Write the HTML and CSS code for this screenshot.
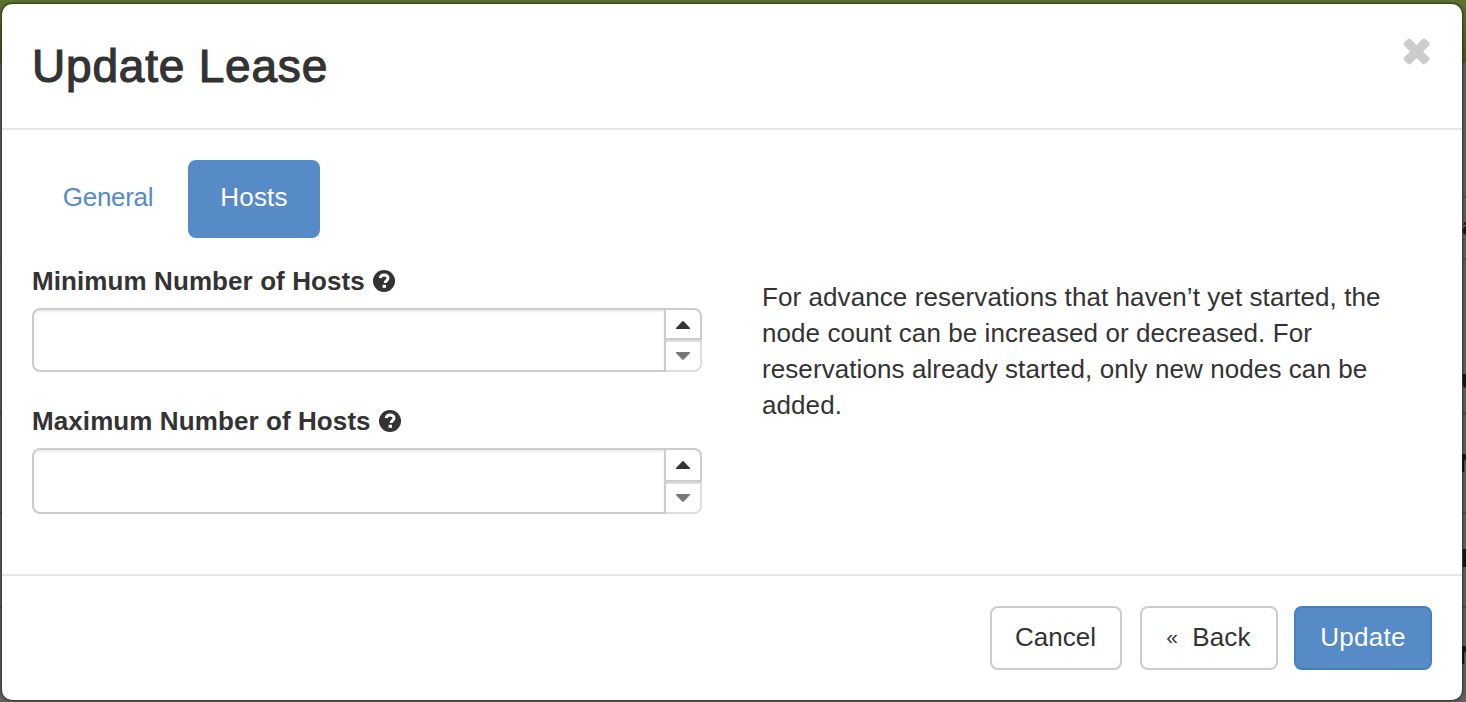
FILE: index.html
```html
<!DOCTYPE html>
<html lang="en">
<head>
<meta charset="utf-8">
<title>Update Lease</title>
<link rel="stylesheet" href="styles.css">
</head>
<body>
<div class="backdrop" aria-hidden="true">
  <div class="topbar"></div>
  <span class="rule rule-1"></span><span class="rule rule-2"></span><span class="rule rule-3"></span><span class="rule rule-4"></span><span class="rule rule-5"></span>
  <span class="peek peek-1">a</span>
  <span class="peek peek-2">u</span>
  <span class="peek peek-3">N</span>
  <span class="peek peek-4">I</span>
  <span class="peek peek-5">N</span>
</div>
<div class="modal" role="dialog">
  <header class="modal-header">
    <h3 class="title">Update Lease</h3>
    <button class="close" aria-label="Close"><svg width="28" height="28" viewBox="0 0 28 28"><g transform="translate(13.6 14.5) rotate(45)" fill="#ccc"><rect x="-15" y="-4.6" width="30" height="9.2" rx="2.2"/><rect x="-4.6" y="-15" width="9.2" height="30" rx="2.2"/></g></svg></button>
  </header>
  <div class="modal-body">
    <nav class="tabs">
      <a class="tab general">General</a>
      <a class="tab active">Hosts</a>
    </nav>
    <div class="columns">
      <form class="fields">
        <div class="field">
          <label class="label"><span>Minimum Number of Hosts</span>
            <svg class="help" width="22" height="22" viewBox="0 0 22 22"><circle cx="11" cy="11" r="11" fill="#333"/><path d="M7.2 8.2C7.4 5.7 9 4.9 11 4.9c2.2 0 4 1.1 4 3.2 0 2.6-2.9 2.5-2.9 4.9" fill="none" stroke="#fff" stroke-width="3"/><rect x="9.6" y="14.8" width="3.4" height="3" fill="#fff"/></svg></label>
          <div class="spinner">
            <div class="input"></div>
            <div class="steps">
              <span class="step up"><svg width="14" height="8" viewBox="0 0 14 8"><path d="M0 7 6.2.4Q7-.2 7.8.4L14 7v1H0z" fill="#333"/></svg></span>
              <span class="step down"><svg width="14" height="8" viewBox="0 0 14 8"><path d="M0 0h14v1L7.8 7.6Q7 8.2 6.2 7.6L0 1z" fill="#777"/></svg></span>
            </div>
          </div>
        </div>
        <div class="field tall">
          <label class="label"><span>Maximum Number of Hosts</span>
            <svg class="help" width="22" height="22" viewBox="0 0 22 22"><circle cx="11" cy="11" r="11" fill="#333"/><path d="M7.2 8.2C7.4 5.7 9 4.9 11 4.9c2.2 0 4 1.1 4 3.2 0 2.6-2.9 2.5-2.9 4.9" fill="none" stroke="#fff" stroke-width="3"/><rect x="9.6" y="14.8" width="3.4" height="3" fill="#fff"/></svg></label>
          <div class="spinner">
            <div class="input"></div>
            <div class="steps">
              <span class="step up"><svg width="14" height="8" viewBox="0 0 14 8"><path d="M0 7 6.2.4Q7-.2 7.8.4L14 7v1H0z" fill="#333"/></svg></span>
              <span class="step down"><svg width="14" height="8" viewBox="0 0 14 8"><path d="M0 0h14v1L7.8 7.6Q7 8.2 6.2 7.6L0 1z" fill="#777"/></svg></span>
            </div>
          </div>
        </div>
      </form>
      <p class="description">For advance reservations that haven’t yet started, the<br>node count can be increased or decreased. For<br>reservations already started, only new nodes can be<br>added.</p>
    </div>
  </div>
  <footer class="modal-footer">
    <button class="btn cancel"><span>Cancel</span></button>
    <button class="btn back"><span class="chev">«</span><span>Back</span></button>
    <button class="btn primary"><span>Update</span></button>
  </footer>
</div>
</body>
</html>
```
FILE: styles.css
```css
* { box-sizing: border-box; }
body {
  margin: 0;
  width: 1466px;
  height: 702px;
  padding: 4px 4px 2px 2px;
  overflow: hidden;
  background: #616161;
  color: #333;
  font: 26px/36px "Liberation Sans", Arial, sans-serif;
}
.backdrop { position: absolute; top: 0; left: 0; width: 1466px; height: 702px; overflow: hidden; }
.topbar { height: 63px; background: linear-gradient(#5c7432, #42591d); }
.rule { position: absolute; left: 0; width: 100%; height: 2px; background: #515151; }
.rule-1 { top: 196px; }
.rule-2 { top: 258px; }
.rule-3 { top: 412px; height: 3px; }
.rule-4 { top: 512px; }
.rule-5 { top: 606px; }
.peek { position: absolute; left: 1462px; color: #161616; font-weight: bold; font-size: 26px; line-height: 30px; }
.peek-1 { top: 211px; }
.peek-2 { top: 364px; left: 1461px; }
.peek-3 { top: 448px; left: 1459px; }
.peek-4 { top: 543px; left: 1461px; }
.peek-5 { top: 640px; left: 1459px; }
.modal {
  position: relative;
  width: 1460px;
  height: 696px;
  display: flex;
  flex-direction: column;
  background: #fff;
  border-radius: 10px;
  box-shadow: 0 0 3px 1px rgba(0, 0, 0, .5);
}
.modal-header {
  height: 126px;
  padding: 30px;
  display: flex;
  justify-content: space-between;
  align-items: flex-start;
  border-bottom: 2px solid #e5e5e5;
}
.title { margin: 0; font-size: 46px; line-height: 64px; font-weight: normal; letter-spacing: .8px; -webkit-text-stroke: 1.2px #333; white-space: nowrap; }
.close { margin: 3px 1px 0 0; padding: 0; border: 0; background: none; width: 28px; height: 28px; }
.close svg { display: block; }
.modal-body { height: 444px; padding: 30px; }
.tabs { display: flex; gap: 4px; height: 78px; }
.tab { width: 152px; height: 78px; line-height: 74px; text-align: center; color: #568bc7; border-radius: 8px; white-space: nowrap; }
.general { letter-spacing: -.3px; }
.tab.active { width: 132px; background: #568bc7; color: #fff; letter-spacing: .2px; }
.columns { display: flex; gap: 60px; padding-top: 24px; }
.fields { width: 670px; }
.field { height: 140px; }
.label { display: flex; align-items: center; gap: 7px; height: 38px; font-weight: bold; letter-spacing: .09px; white-space: nowrap; }
.spinner { display: flex; height: 64px; margin-top: 8px; }
.tall .spinner { height: 66px; }
.input { width: 634px; border: 2px solid #ccc; border-radius: 8px 0 0 8px; box-shadow: inset 0 2px 2px rgba(0, 0, 0, .075); }
.steps { width: 36px; display: flex; flex-direction: column; }
.step { height: 32px; display: flex; align-items: flex-start; justify-content: center; border: 2px solid #ccc; border-left: 0; }
.up { border-radius: 0 8px 0 0; padding-top: 11px; }
.tall .up { height: 34px; }
.down { border-color: #ddd; border-radius: 0 0 8px 0; padding-top: 10px; }
.label { gap: 8px; }
.description { margin: 17px 0 0; width: 640px; letter-spacing: .08px; white-space: nowrap; }
.modal-footer { height: 126px; border-top: 2px solid #e5e5e5; padding: 30px; display: flex; justify-content: flex-end; }
.btn { height: 64px; padding: 0; border: 2px solid #ccc; border-radius: 8px; background: #fff; color: #333; font: inherit; white-space: nowrap; display: flex; align-items: center; justify-content: center; }
.btn span { position: relative; top: -1px; }
.cancel { width: 132px; margin-right: 18px; padding-right: 1px; }
.back { width: 138px; margin-right: 16px; padding-right: 1px; gap: 14px; letter-spacing: .2px; }
.chev { font-size: 21px; }
.primary { width: 138px; border-color: #457fbd; background: #568bc7; color: #fff; letter-spacing: .3px; }
```
